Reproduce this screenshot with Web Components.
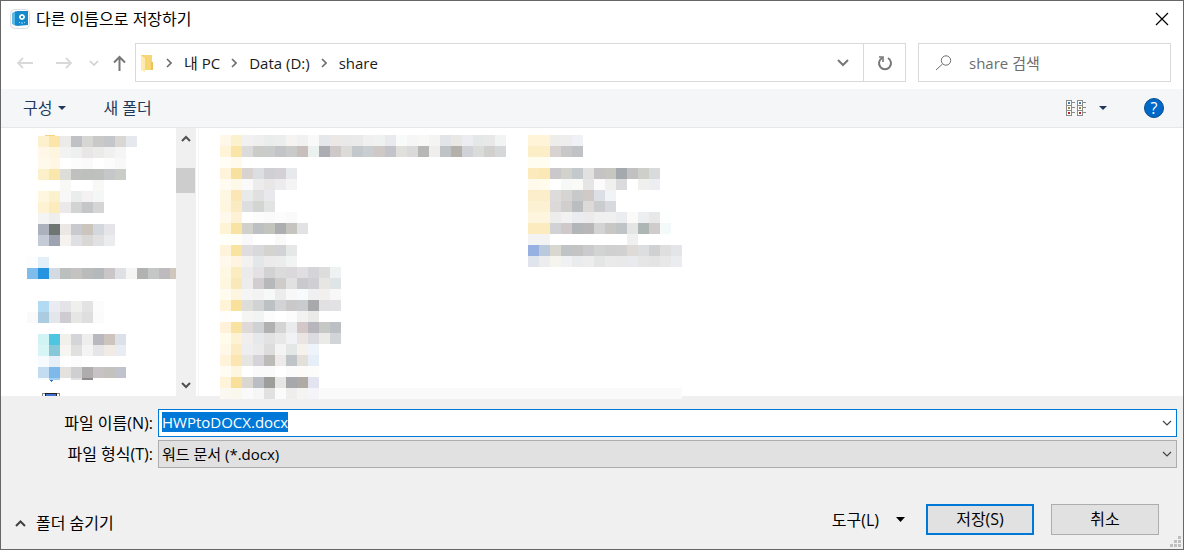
<!DOCTYPE html>
<html lang="ko">
<head>
<meta charset="utf-8">
<title>다른 이름으로 저장하기</title>
<style>
    body {
        margin: 0;
        font-family: "Open Sans", "Noto Sans CJK KR", sans-serif;
        font-size: 16px;
        line-height: 20px;
        color: #000;
    }
</style>
</head>
<body>
<save-dialog>
    <title-bar slot="header">다른 이름으로 저장하기</title-bar>
    <nav-bar slot="header" search="share 검색">
        <path-item>내 PC</path-item>
        <path-item>Data (D:)</path-item>
        <path-item>share</path-item>
    </nav-bar>
    <command-bar slot="header"></command-bar>
    <file-browser></file-browser>
    <file-fields slot="footer"></file-fields>
    <dialog-actions slot="footer"></dialog-actions>
</save-dialog>

<script>
class BaseElement extends HTMLElement {
    constructor() {
        super();
        this.$shadow = this.attachShadow({ mode: 'open' });
    }

    connectedCallback() {
        this.$shadow.innerHTML = `
        <style>
            * { box-sizing: border-box; }
            svg { display: block; flex: none; }
            button, input, select { font: inherit; color: inherit; margin: 0; }
            button { padding: 0; border: 0; background: none; }
        </style>
        ${this.template()}`;
        this.ready();
    }

    ready() {}
}

class SaveDialog extends BaseElement {
    template() {
        return `
        <style>
            :host {
                display: flex;
                flex-direction: column;
                box-sizing: border-box;
                min-height: 100vh;
                border: 1px solid #666;
                background: #fff;
            }
            main { display: flex; flex: 1; }
            footer { background: #f0f0f0; }
        </style>
        <header><slot name="header"></slot></header>
        <main><slot></slot></main>
        <footer><slot name="footer"></slot></footer>`;
    }
}

class TitleBar extends BaseElement {
    template() {
        return `
        <style>
            :host {
                display: flex;
                align-items: center;
                gap: 6px;
                height: 36px;
                padding: 0 14px 0 9px;
            }
            .title { flex: 1; }
        </style>
        <svg width="20" height="20" viewBox="0 0 20 20">
            <rect x=".5" y=".5" width="19" height="19" rx="4" fill="#fbfbfb" stroke="#dedede"/>
            <path d="M2 4l4-2v15l-4-2z" fill="#5bb8e4"/>
            <path d="M5 3l2-1h11v14l-11 1-2-1z" fill="#1689cc"/>
            <circle cx="12" cy="8" r="2" fill="none" stroke="#fff" stroke-width="1.5"/>
            <path d="M12 5v1M12 10v1M9 8h1M14 8h1" stroke="#fff"/>
            <path d="M9 13.5h1M11 14h2M14 13.5h1" stroke="#a8d8f0"/>
        </svg>
        <span class="title"><slot></slot></span>
        <button aria-label="닫기">
            <svg width="14" height="14" viewBox="0 0 14 14"><path d="M1 1l12 12M13 1L1 13" stroke="#000" stroke-width="1.2"/></svg>
        </button>`;
    }
}

class PathItem extends BaseElement {
    template() {
        return `
        <style>
            :host { display: flex; align-items: center; gap: 12px; }
            a { color: #1a1a1a; text-decoration: none; }
        </style>
        <svg width="6" height="10" viewBox="0 0 6 10"><path d="M1 1l4 4-4 4" fill="none" stroke="#6d6d6d" stroke-width="1.6"/></svg>
        <a href="#"><slot></slot></a>`;
    }
}

class NavBar extends BaseElement {
    template() {
        return `
        <style>
            :host {
                display: flex;
                align-items: center;
                padding: 6px 12px 7px 15px;
                font-size: 15px;
            }
            .history { display: flex; align-items: center; width: 119px; gap: 22px; }
            .history button:nth-child(3) { margin: 0 -8px 0 -5px; }
            .address {
                display: flex;
                flex: 1;
                align-items: center;
                height: 39px;
                border: 1px solid #d9d9d9;
            }
            .path { display: flex; flex: 1; align-items: center; gap: 11px; padding-left: 5px; }
            .path svg { margin-right: 2px; }
            .drop { padding: 0 14px; }
            .refresh { align-self: stretch; width: 42px; border-left: 1px solid #d9d9d9; }
            .refresh svg { margin: auto; }
            .search {
                display: flex;
                flex: 0 0 253px;
                min-width: 0;
                align-items: center;
                gap: 17px;
                height: 39px;
                margin-left: 12px;
                padding: 0 16px;
                border: 1px solid #d9d9d9;
            }
            input { flex: 1; min-width: 0; padding: 0; border: 0; outline: 0; background: none; }
            input::placeholder { color: #6d6d6d; opacity: 1; }
        </style>
        <div class="history">
            <button aria-label="뒤로"><svg width="17" height="12" viewBox="0 0 17 12"><path d="M17 6H2M7 1L2 6l5 5" fill="none" stroke="#d9d9d9" stroke-width="1.8"/></svg></button>
            <button aria-label="앞으로"><svg width="17" height="12" viewBox="0 0 17 12"><path d="M1 6h15M11 1l5 5-5 5" fill="none" stroke="#d9d9d9" stroke-width="1.8"/></svg></button>
            <button aria-label="최근 위치"><svg width="10" height="6" viewBox="0 0 10 6"><path d="M1 1l4 4 4-4" fill="none" stroke="#d0d0d0" stroke-width="1.6"/></svg></button>
            <button aria-label="위로"><svg width="13" height="16" viewBox="0 0 13 16"><path d="M6.5 16V2M1 7.5L6.5 2 12 7.5" fill="none" stroke="#777" stroke-width="2"/></svg></button>
        </div>
        <div class="address">
            <div class="path">
                <svg width="12" height="18" viewBox="0 0 12 18">
                    <path d="M0 1h7v14H3z" fill="#f4ce6a"/>
                    <path d="M3 1h8v15H3z" fill="#f7d674"/>
                    <path d="M10 8h2v8h-2z" fill="#edc45a"/>
                    <path d="M0 1l4 3v14l-4-2z" fill="#ffeab0"/>
                </svg>
                <slot></slot>
            </div>
            <button class="drop" aria-label="이전 위치"><svg width="12" height="8" viewBox="0 0 12 8"><path d="M1 1l5 5 5-5" fill="none" stroke="#777" stroke-width="2"/></svg></button>
            <button class="refresh" aria-label="새로 고침">
                <svg width="16" height="16" viewBox="0 0 16 16">
                    <path d="M11 3a6 6 0 1 1-6 0" fill="none" stroke="#777" stroke-width="2"/>
                    <path d="M2 2h4v5" fill="none" stroke="#777" stroke-width="1.6"/>
                </svg>
            </button>
        </div>
        <label class="search">
            <svg width="17" height="16" viewBox="0 0 17 16"><circle cx="11" cy="5.5" r="4.7" fill="none" stroke="#6d6d6d"/><path d="M7.500 9L1 15" stroke="#6d6d6d"/></svg>
            <input type="text" aria-label="${this.getAttribute('search')}" placeholder="${this.getAttribute('search')}">
        </label>`;
    }
}

class CommandBar extends BaseElement {
    template() {
        const cell = (x, y, color) => `<rect x="${x + .5}" y="${y + .5}" width="5" height="5" fill="#fff" stroke="#8b8b8b"/><rect x="${x + 2}" y="${y + 2}" width="2" height="2" fill="${color}"/><path d="M${x + 6} ${y + 2.5}h3" stroke="#8b8b8b"/>`;
        const strip = x => cell(x, 0, '#3b7fb5') + cell(x, 5, '#9a8a3c') + cell(x, 10, '#c0281c');
        return `
        <style>
            :host {
                display: flex;
                align-items: center;
                box-sizing: border-box;
                height: 39px;
                padding: 0 19px 0 22px;
                border-bottom: 1px solid #e6e7e8;
                background: #f4f6f8;
                color: #1e395b;
            }
            button { display: flex; align-items: center; gap: 6px; }
            .new { margin-left: 37px; }
            .view { gap: 12px; margin-left: auto; }
            .help { margin-left: 37px; }
            .help text { font: 16px "Open Sans", sans-serif; fill: #fff; text-anchor: middle; }
        </style>
        <button>구성<svg width="8" height="4" viewBox="0 0 8 4"><path d="M0 0h8L4 4z" fill="#1e395b"/></svg></button>
        <button class="new">새 폴더</button>
        <button class="view" aria-label="보기 변경">
            <svg width="21" height="16" viewBox="0 0 21 16">${strip(0)}${strip(11)}</svg>
            <svg width="8" height="4" viewBox="0 0 8 4"><path d="M0 0h8L4 4z" fill="#1e395b"/></svg>
        </button>
        <button class="help" aria-label="도움말">
            <svg width="20" height="20" viewBox="0 0 20 20"><circle cx="10" cy="10" r="9.5" fill="#0068c8" stroke="#0b4a85"/><text x="10" y="16">?</text></svg>
        </button>`;
    }
}

// Censored names: every list is rows of 11px blocks, "." is an empty block,
// an empty string is an empty row and "color*n" repeats a block.
const CENSORED = {
    tree: [
        '. fdf0cc fbe5a8 ecebe9 c0c1c4 d6d6d4 c9c9c8 c5c6ca d9d6d3 e5e9ed',
        '. fff8e8 fef5df f2f2f3 edf0ef e8e6e7 ebebea f0f0f0 f5f5f5',
        '. fefaeb fff7e3 . fcfcfc fafafa . fcfcfc f8f8f8',
        '. fcf0cb f9e7ab dddeda c0c1be bec0bd bfc1be c5c7c9 caccc8',
        '. fffffc . f8f9f7 . . f8f9f7',
        '. fef6de fcf1cd f8f8f9 ebedec f3f1f1 f5f6f6',
        '. fdf3d3 fbebbd ebe9e9 d1d4d3 c5c6c8 d5d5d5',
        '. f4f4f4 eeeeee',
        '. adb0bd 6f7672 eae7e5 c8cacf ccc5bd d3d8de e5e5e9',
        '. c5cad7 9da4af f5f2f0 dfe0e3 dad8d7 e1e1e1 ebecee',
        '',
        'fbfdfe e2eef8',
        '7ebdeb 2694de d3dae2 bbbfbd c5c3c1 b9bcba b4babb cac5c7 dfe0e3 f5f5f5 b2b2b1 c5c7c6 bdbbbd cfc6bc',
        '',
        '',
        '. b3daf3 ebecf1 e4e3e7 efefec e3e3e3 fcfcfc',
        'f9faf9 aacbe0 e3e6ea cfccd1 e6e6e4 dededf fbfbfb',
        '',
        '. d2f3f4 4ec6e2 f2f0eb d3d5d9 eeeeee b9b7c0 cdc4be dbe0e9',
        '. d8f5f5 87c8d8 f6f5f2 e0e0e1 f4f4f4 e6e6e9 f0ebe5 eaecf3',
        '. f6fbfe e7f0f9 . fcfcfc',
        '. c3dcf2 7eb9eb e4e2df cfcfd2 afacae c8c2c4 c4c2bd c0c3cc'
    ],
    first: [
        'fff7e8 fcf1cd f1f1f2 efefef ebecec ebeeed f6f4f2 f1f1f2 f9f9f9 e5e7ea ebe8e7 e9e9e9 ebeaeb f0f0f0 f0f1f1 e9eaed f9fafa f6f6f6 f8f9f6 f4f4f2 e2e4e8 e9e8e4 ecedf1 e5e8e8 e9e8e9 f2f4f4',
        'fff3d8 fbe5a6 dbdbdc cbcbc8 c9cccb c2c4c7 c9cbcb c8bfbd eaf1ef abadb3 cec9c8 dcdbd8 c3c8cd cbced0 cec9c7 c2c4ca e0dfdc d9dad9 b7b7b6 efeeec c0c3c6 b4b1aa d0d2d7 d9dcd9 d2d0ce d5d7d9',
        'fffdf4 fffaeb',
        'fff4d9 f7e0a0 d8d3d1 dcdee1 d0d0d4 d3d1d5 e8e9ed',
        'fffbf0 fef8e8 fafafa ececed e9e7e5 ececee f4f4f4',
        'fef7e1 fde6b5 e8ebea e0e0e0 e9e9ed',
        'fef6df faebc2 dddedf d3d5d3 e2e3e3',
        'fff9ec fdf1d6 . fcfcfc fafafa fcfcfc fafafa',
        'fff3d5 f8e3a3 d1d1cc bdc0c2 c2c4be adaeb0 c6c4bf e2e2e5',
        'fffffa fefdf6 f9f9fa . . f9f9f9',
        'fff4db f9e3a1 dfdddf d8d9da d5d3d0 d1d2d5 e5e8e6',
        'fff9ed fef4df f3f2f0 e4e7e7 eceaea ebecec f1f4f3',
        'fef7e1 fbecc2 ebebec e3e1e4 d2d2d2 dbdbdb dad8da e0dee0 d5d5d9 dddddd eff2f2',
        'fef6df f9e8b8 ededee d1cdd1 b6b8b9 cecccb e1e1e1 cacacc d0d0d4 e7e6e3 dfe5e7',
        'fffcef fdf5df f5f5f5 f3f3f3 f7f9f9 ececed f8f8f8 f8fbfb f1f0f1 f1f0ef f8f8f8',
        'fff4d7 f9e09b ddddda d0d2d3 bcc2c3 d3d3d5 cbc8ca c9cccf a8a9ab e1e1e1 e2e2e5',
        'fffefc . f5f6f4 f2f4f4 fcfcfd . fcfcfc f2f2f2 eaebe8',
        'fff1da fae3a0 dfdad8 d0d1d4 b0b1b0 d4d4d5 e9ebed d3c8c7 b8b6bd c6c8c6 bac0c3',
        'fffceb fdf2d4 f0efee e7e8ec e2e2e2 e8e8e9 f1f2f6 eae5e2 dcdbdf eaebe8 d3d4d8',
        'fff7e7 fcecc3 eeeef0 eaeaeb dddddd f4f4f4 e3e7e6 f5f1ed eff4fb',
        'fff4da fce5b0 e5e5e2 d3d3d9 bdbbb8 eeeaea bec4c7 e3dfd9 e6eef7',
        'fffcf3 fff6e2 . fafafb fafafb . fbfbfb fcfbfa fcfcfa',
        'fff4da f8e09a dad7d3 bbbdc5 9d9d9c e6e6e4 a7a8ab b0aaa4 e4e4f0',
        'fbf8f2 faf7ec fafafb f6f6f6 e1e1e1 fbfbfc eeeeef f6f4f2 f5f5f9 fafafa*33'
    ],
    second: [
        'fff4d8*2 ededeb eeeeee f0f1f6',
        'fceec6*2 d8d3d1 c7c8c7 c0c2c5',
        'fffcf0*2',
        'fdeabc fbe8b5 cac8ca d1d2cb c4c9cd e1e1e2 c6c3c4 c8c6c1 a3a9ac c0c1c0 cecfc8 d9dadc',
        'fffaec fffcec . f7f9f8 fafaf7 e5e5e5 fbfbfb f0f0ef dbdbdd . f0f0ef edeef1',
        'fceecb*2 dedbdb d6d5d3 c7c9cb d0c9c5 dce0e6 f2f3f6',
        'fcf1d2*2 ddd9d9 d1cfce babec1 dcd9d6 caccce d8d9de',
        'fef5df*2 ededec f2f2f2 ebecef eceaea f0f0f0*2 ebecef fbfaf8 edeef0 e8e8e8 fcfffe',
        'fbebbf*2 d1d2d4 d0c9cb b2b6b9 b8b6b7 d3d3d3 c9c7c3 bfc4c6 e5e5e5 adb6b5 d0cccb f4f9f9',
        'f3f3f3*2 . . . . . . . f0f0f0',
        '96b1e1 bbc9dd d9d8d0 c0c4c6 c3c4c3 cbcbcd d2d4d3 d0d0d1 d1d1d2 dddad8 dddee0 d0d1d3 dfdfdf e4e5e8',
        'dfe4ed ededed f5f4ef eff1f2 e9ebed ededee e4e6e6 ebeaeb eae9ea e8eaed e6e6e7 e4e4e4 e8e8e9 ebecef'
    ]
};

class CensoredList extends BaseElement {
    template() {
        const size = 11;
        const rows = CENSORED[this.getAttribute('name')];
        const columns = rows[0].split(' ').length;
        let blocks = '';
        rows.forEach((row, y) => {
            let x = 0;
            row.split(' ').filter(Boolean).forEach(block => {
                const [color, count = 1] = block.split('*');
                if(color !== '.') {
                    blocks += `<rect x="${x * size}" y="${y * size}" width="${count * size}" height="${size}" fill="#${color}"/>`;
                }
                x += Number(count);
            });
        });
        return `
        <style>
            :host { display: block; }
            svg { overflow: visible; shape-rendering: crispEdges; }
        </style>
        <svg width="${columns * size}" height="${(rows.length - 1) * size}">${blocks}</svg>`;
    }
}

class FileBrowser extends BaseElement {
    template() {
        return `
        <style>
            :host { display: flex; flex: 1; }
            nav { width: 175px; padding: 7px 0 0 26px; overflow: hidden; }
            .folder { margin-left: 18px; }
            .rest { margin-left: 11px; }
            .scroll {
                display: flex;
                flex-direction: column;
                align-items: center;
                justify-content: space-between;
                width: 20px;
                padding: 7px 0;
                background: #f0f0f0;
            }
            .track { flex: 1; align-self: stretch; padding-top: 26px; }
            .thumb { width: 19px; height: 25px; background: #cdcdcd; }
            .files {
                position: relative;
                display: flex;
                flex: 1;
                align-items: flex-start;
                gap: 22px;
                margin-left: 2px;
                padding: 7px 0 0 21px;
                border-left: 1px solid #f5f5f5;
            }
        </style>
        <nav>
            <svg class="folder" width="10" height="1"><path d="M0 0h10v1H0z" fill="#f4d57c"/></svg>
            <censored-list name="tree"></censored-list>
            <svg class="rest" width="60" height="29" viewBox="0 0 60 29" shape-rendering="crispEdges">
                <path d="M0 11h11v2H0z" fill="#f6fbfe"/>
                <path d="M11 11h11v2H11z" fill="#a8cef0"/>
                <path d="M33 11h11v2H33z" fill="#e0e0e0"/>
                <path d="M44 11h11v2H44z" fill="#918b8e"/>
                <path d="M12 13h3v1h-1v1h-1v-1h-1z" fill="#2a7bc8"/>
                <path d="M4 26h18v3H4z" fill="#858585"/>
                <path d="M5 27h16v2H5z" fill="#fff"/>
                <path d="M7 26h12v3H7z" fill="#222"/>
                <path d="M8 27h10v2H8z" fill="#3f6fd0"/>
            </svg>
        </nav>
        <div class="scroll">
            <svg width="10" height="7" viewBox="0 0 10 7"><path d="M1 6l4-4 4 4" fill="none" stroke="#505050" stroke-width="2"/></svg>
            <div class="track"><div class="thumb"></div></div>
            <svg width="10" height="7" viewBox="0 0 10 7"><path d="M1 1l4 4 4-4" fill="none" stroke="#505050" stroke-width="2"/></svg>
        </div>
        <div class="files">
            <censored-list name="first"></censored-list>
            <censored-list name="second"></censored-list>
        </div>`;
    }
}

class FileFields extends BaseElement {
    template() {
        return `
        <style>
            :host {
                display: grid;
                grid-template-columns: 152px 1fr;
                gap: 3px 5px;
                align-items: center;
                padding: 13px 6px 0 0;
            }
            label { text-align: right; }
            .field { position: relative; display: flex; font-size: 15px; }
            .field svg { position: absolute; right: 5px; top: 11px; pointer-events: none; }
            input, select {
                width: 100%;
                height: 28px;
                padding: 0 24px 0 3px;
                border: 1px solid #adadad;
                border-radius: 0;
                outline: 0;
                background: #e1e1e1;
                appearance: none;
            }
            input { padding-bottom: 2px; border-color: #0078d7; background: #fff; }
            input::selection { background: #0078d7; color: #fff; }
        </style>
        <label for="name">파일 이름(N):</label>
        <div class="field">
            <input id="name" type="text" value="HWPtoDOCX.docx" spellcheck="false">
            <svg width="10" height="6" viewBox="0 0 10 6"><path d="M1 1l4 4 4-4" fill="none" stroke="#444" stroke-width="1.2"/></svg>
        </div>
        <label for="type">파일 형식(T):</label>
        <div class="field">
            <select id="type"><option>워드 문서 (*.docx)</option></select>
            <svg width="10" height="6" viewBox="0 0 10 6"><path d="M1 1l4 4 4-4" fill="none" stroke="#444" stroke-width="1.2"/></svg>
        </div>`;
    }

    ready() {
        const input = this.$shadow.querySelector('input');
        input.focus();
        input.select();
    }
}

class DialogActions extends BaseElement {
    template() {
        return `
        <style>
            :host {
                position: relative;
                display: flex;
                align-items: center;
                padding: 36px 24px 14px 14px;
            }
            button { display: flex; align-items: center; }
            .hide { gap: 10px; margin: 6px auto 0 0; }
            .tools { gap: 17px; margin-right: 21px; }
            .push {
                justify-content: center;
                width: 108px;
                height: 31px;
                padding-bottom: 2px;
                border: 1px solid #adadad;
                background: #e1e1e1;
            }
            .default { margin-right: 17px; border: 2px solid #0078d7; }
            .grip { position: absolute; right: 2px; bottom: 2px; }
        </style>
        <button class="hide">
            <svg width="11" height="8" viewBox="0 0 11 8"><path d="M1 7l4.500-4.500L10 7" fill="none" stroke="#404040" stroke-width="2"/></svg>
            폴더 숨기기
        </button>
        <button class="tools">도구(L)<svg width="9" height="5" viewBox="0 0 9 5"><path d="M0 0h9L4.500 5z"/></svg></button>
        <button class="push default">저장(S)</button>
        <button class="push">취소</button>
        <svg class="grip" width="11" height="11" viewBox="0 0 11 11"><path d="M8 0h3v3H8zM4 4h3v3H4zM8 4h3v3H8zM0 8h3v3H0zM4 8h3v3H4zM8 8h3v3H8z" fill="#bfbfbf"/></svg>`;
    }
}

window.customElements.define('save-dialog', SaveDialog);
window.customElements.define('title-bar', TitleBar);
window.customElements.define('path-item', PathItem);
window.customElements.define('nav-bar', NavBar);
window.customElements.define('command-bar', CommandBar);
window.customElements.define('censored-list', CensoredList);
window.customElements.define('file-browser', FileBrowser);
window.customElements.define('file-fields', FileFields);
window.customElements.define('dialog-actions', DialogActions);
</script>
</body>
</html>
